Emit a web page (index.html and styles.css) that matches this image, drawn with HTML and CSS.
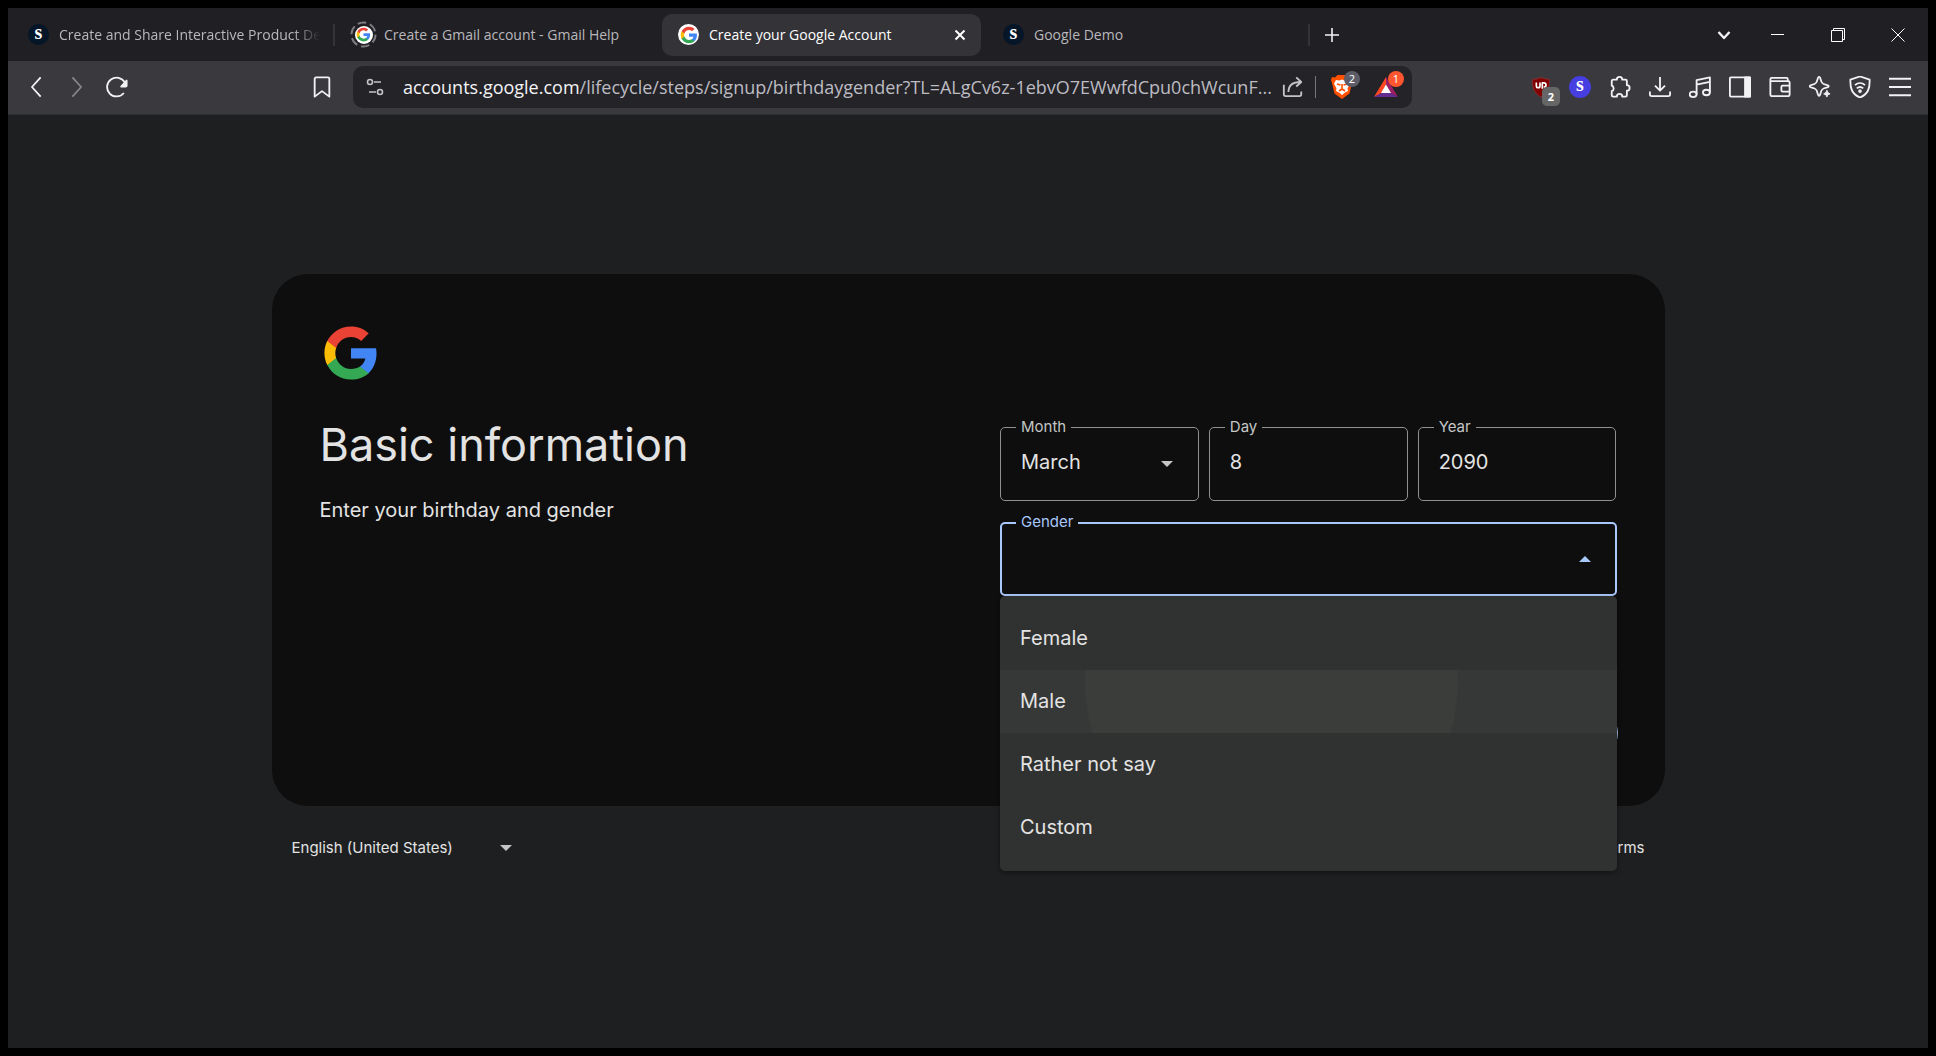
FILE: index.html
```html
<!DOCTYPE html>
<html lang="en">
<head>
    <meta charset="UTF-8">
    <meta name="viewport" content="width=device-width, initial-scale=1.0">
    <title>Create your Google Account</title>
    <link rel="stylesheet" href="styles.css">
</head>
<body>
    <!-- shared icon shapes -->
    <svg class="sprite" aria-hidden="true">
        <symbol id="google-g" viewBox="0 0 48 48">
            <path fill="#4285F4" d="M45.12 24.5c0-1.56-.14-3.06-.4-4.5H24v8.51h11.84c-.51 2.75-2.06 5.08-4.39 6.64v5.52h7.11c4.16-3.83 6.56-9.47 6.56-16.17z"/>
            <path fill="#34A853" d="M24 46c5.94 0 10.92-1.97 14.56-5.33l-7.11-5.52c-1.97 1.32-4.49 2.1-7.45 2.1-5.73 0-10.58-3.87-12.31-9.07H4.34v5.7C7.96 41.07 15.4 46 24 46z"/>
            <path fill="#FBBC05" d="M11.69 28.18C11.25 26.86 11 25.45 11 24s.25-2.86.69-4.18v-5.7H4.34C2.85 17.09 2 20.45 2 24c0 3.55.85 6.91 2.34 9.88l7.35-5.7z"/>
            <path fill="#EA4335" d="M24 10.75c3.23 0 6.13 1.11 8.41 3.29l6.31-6.31C34.91 4.18 29.93 2 24 2 15.4 2 7.96 6.93 4.34 14.12l7.35 5.7c1.73-5.2 6.58-9.07 12.31-9.07z"/>
        </symbol>
    </svg>

    <div class="window">
        <header class="tab-strip">
            <div class="tabs">
                <a href="#" class="tab">
                    <span class="favicon favicon-s">s</span>
                    <span class="tab-title tab-title-fade">Create and Share Interactive Product Demos</span>
                </a>
                <span class="tab-divider"></span>
                <a href="#" class="tab">
                    <span class="favicon favicon-loading">
                        <svg class="spinner" viewBox="0 0 28 28"><circle cx="14" cy="14" r="12.5" fill="none" stroke="#7c7b80" stroke-width="2" stroke-dasharray="9 4.1"/></svg>
                        <span class="favicon favicon-g"><svg viewBox="0 0 48 48"><use href="#google-g"/></svg></span>
                    </span>
                    <span class="tab-title">Create a Gmail account - Gmail Help</span>
                </a>
                <span class="tab-divider tab-divider-hidden"></span>
                <a href="#" class="tab tab-active">
                    <span class="favicon favicon-g"><svg viewBox="0 0 48 48"><use href="#google-g"/></svg></span>
                    <span class="tab-title">Create your Google Account</span>
                    <button class="tab-close" aria-label="Close tab">
                        <svg viewBox="0 0 12 12"><path d="M1.5 1.5l9 9M10.5 1.5l-9 9" stroke="#fff" stroke-width="2" fill="none"/></svg>
                    </button>
                </a>
                <span class="tab-divider tab-divider-hidden"></span>
                <a href="#" class="tab">
                    <span class="favicon favicon-s">s</span>
                    <span class="tab-title">Google Demo</span>
                </a>
                <span class="tab-divider"></span>
                <button class="icon-button" aria-label="New tab">
                    <svg class="icon" viewBox="0 0 20 20"><path d="M10 3v14M3 10h14"/></svg>
                </button>
            </div>
            <div class="window-buttons">
                <button class="icon-button" aria-label="Search tabs">
                    <svg class="icon" viewBox="0 0 20 20"><path d="M4.5 7l5.5 6 5.5-6" stroke-width="2.4"/></svg>
                </button>
                <button class="window-button" aria-label="Minimize">
                    <svg viewBox="0 0 14 14"><path d="M0 6.5h13"/></svg>
                </button>
                <button class="window-button" aria-label="Restore">
                    <svg viewBox="0 0 14 14"><path d="M.5 2.5h11v11H.5zM2.5 2.5v-2h11v11h-2"/></svg>
                </button>
                <button class="window-button" aria-label="Close">
                    <svg viewBox="0 0 14 14"><path d="M.5.5l13 13M13.5.5l-13 13"/></svg>
                </button>
            </div>
        </header>

        <nav class="toolbar">
            <button class="icon-button" aria-label="Back">
                <svg class="icon icon-large" viewBox="0 0 24 24"><path d="M16 1.5L6.5 12 16 22.500"/></svg>
            </button>
            <button class="icon-button icon-muted" aria-label="Forward">
                <svg class="icon icon-large" viewBox="0 0 24 24"><path d="M7 1.5L16.5 12 7 22.500"/></svg>
            </button>
            <button class="icon-button" aria-label="Reload">
                <svg class="icon icon-large" viewBox="0 0 24 24"><path d="M19.5 18.5A10.300 10.300 0 1 1 20.500 7"/><path d="M22.500 5v5.500a1 1 0 0 1-1 1H16.500z" fill="currentColor"/></svg>
            </button>
            <button class="icon-button bookmark" aria-label="Bookmark this page">
                <svg class="icon icon-large" viewBox="0 0 24 24"><path d="M5.5 1.500h13a1.500 1.500 0 0 1 1.500 1.500v19.500l-8-6-8 6V3a1.500 1.500 0 0 1 1.500-1.500z"/></svg>
            </button>

            <div class="url-bar">
                <button class="url-button" aria-label="Site information">
                    <svg class="icon" viewBox="0 0 20 20"><circle cx="5" cy="5" r="2.500"/><path d="M9 5h7M4 15h7"/><circle cx="15" cy="15" r="2.500"/></svg>
                </button>
                <a href="#" class="url-text">accounts.google.com<span class="url-path">/lifecycle/steps/signup/birthdaygender?TL=ALgCv6z-1ebvO7EWwfdCpu0chWcunF...</span></a>
                <button class="url-button" aria-label="Share">
                    <svg class="icon icon-large" viewBox="0 0 24 24"><path d="M2 9.500V20a2 2 0 0 0 2 2h15a2 2 0 0 0 2-2v-3M7 17.500c0-7 3.500-11 13.500-11M15.500 1.500l5.500 5-5.500 5"/></svg>
                </button>
                <span class="url-divider"></span>
                <button class="url-button" aria-label="Brave Shields">
                    <svg class="icon icon-shield" viewBox="0 0 24 24"><path d="M7.500 0h9L19 2.500l3-.5 1 3-1 3-2.500 10.500L12 24l-7.500-5.500L2 8 1 5l1-3 3 .5z" fill="#ff5000" stroke="none"/><path d="M6 5l3.500.5L12 4.500l2.500 1L18 5l2 3.500-2.500 5 .5 2.500-3 1.500-3 2.500-3-2.500L6 16l.5-2.500-2.500-5z" fill="#fff" stroke="none"/><path d="M7 9l3.500 1M17 9l-3.500 1M12 9v5M9 16l3-2 3 2" stroke="#ff5000"/></svg>
                    <span class="badge badge-grey">2</span>
                </button>
                <button class="url-button" aria-label="Brave Rewards">
                    <svg class="icon icon-shield" viewBox="0 0 24 24"><g stroke="none"><path d="M12 2L0 22l7.500-4L12 10z" fill="#ff4724"/><path d="M12 2l12 20-7.500-4L12 10z" fill="#9e1f63"/><path d="M0 22h24l-7.500-4h-9z" fill="#662d91"/><path d="M12 9.500l5 8.500H7z" fill="#fff"/></g></svg>
                    <span class="badge badge-red">1</span>
                </button>
            </div>

            <button class="icon-button" aria-label="uBlock Origin">
                <svg class="icon icon-large" viewBox="0 0 24 24"><path d="M13 1.500c2.500 1.500 5.500 2 9 2 .5 9-1 14-9 19.500C5 17.500 3.500 12.500 4 3.500c3.500 0 6.500-.5 9-2z" fill="#800000" stroke="#a0302f" stroke-width=".8"/><path d="M8 7v3.500c0 3 4 3 4 0V7M14.500 14V7.500h1.500c3.500 0 3.500 4.500 0 4.500" stroke="#fff" stroke-width="1.800"/></svg>
                <span class="badge badge-count">2</span>
            </button>
            <button class="icon-button" aria-label="Recorder"><span class="extension-s">s</span></button>
            <button class="icon-button" aria-label="Extensions">
                <svg class="icon icon-large" viewBox="0 0 24 24"><path d="M3 5.500a1.500 1.500 0 0 1 1.500-1.500H8.500a3 3 0 1 1 6 0H18a1.500 1.500 0 0 1 1.500 1.500V10a3 3 0 1 1 0 6v5a1.500 1.500 0 0 1-1.500 1.500h-3.500a3 3 0 0 0-6 0H4.500A1.500 1.500 0 0 1 3 21v-4.500a3.200 3.200 0 0 0 0-6z"/></svg>
            </button>
            <button class="icon-button" aria-label="Downloads">
                <svg class="icon icon-large" viewBox="0 0 24 24"><path d="M12 1v14.500M6.500 10.500l5.500 5.500 5.500-5.500M1 17v3a2 2 0 0 0 2 2h18a2 2 0 0 0 2-2v-3"/></svg>
            </button>
            <button class="icon-button" aria-label="Playlist">
                <svg class="icon icon-large" viewBox="0 0 24 24"><ellipse cx="4.500" cy="20" rx="3.800" ry="3"/><ellipse cx="19" cy="18" rx="3.800" ry="3"/><path d="M8.300 20V4.500L22.800 1.500V18M8.300 9.500l14.500-3"/></svg>
            </button>
            <button class="icon-button" aria-label="Sidebar">
                <svg class="icon icon-large" viewBox="0 0 24 24"><rect x="1" y="1.500" width="22" height="21" rx="1"/><path d="M17.500 1.500H23v21h-5.500z" fill="currentColor"/></svg>
            </button>
            <button class="icon-button" aria-label="Wallet">
                <svg class="icon icon-large" viewBox="0 0 24 24"><path d="M1.500 6V3.500A1.500 1.500 0 0 1 3 2h16a1.500 1.500 0 0 1 1.500 1.500V6M1.500 5.500H21A1.500 1.500 0 0 1 22.500 7v13.500A1.500 1.500 0 0 1 21 22H3a1.500 1.500 0 0 1-1.500-1.500zM22.500 10.500H15A1.500 1.500 0 0 0 13.500 12v3.500A1.500 1.500 0 0 0 15 17h7.500"/></svg>
            </button>
            <button class="icon-button" aria-label="Leo AI">
                <svg class="icon icon-large" viewBox="0 0 24 24"><path d="M11 1c1 0 1.200.6 1.800 3 .8 3.600 1.700 4.600 5.200 5.300 2.600.6 3.500.9 3.500 1.900s-.9 1.200-3.500 1.800c-3.500.8-4.400 1.700-5.200 5.300-.6 2.400-.8 3.200-1.800 3.200s-1.200-.8-1.800-3.200C8.400 14.700 7.500 13.800 4 13 1.400 12.400.5 12.200.5 11.200S1.400 9.900 4 9.300C7.500 8.600 8.400 7.600 9.200 4 9.800 1.600 10 1 11 1z"/><path d="M19.500 15.500l1 2.500 2.500 1.500-2.500 1-1 2.500-1-2.500-2.500-1L18.500 18z" fill="currentColor" stroke-width="1"/></svg>
            </button>
            <button class="icon-button" aria-label="VPN">
                <svg class="icon icon-large" viewBox="0 0 24 24"><path d="M12 .5L22.500 4c.3 9.500-1.500 15.500-10.500 19.500C3 19.500 1.200 13.500 1.500 4z"/><path d="M6.500 10c3.300-3 7.700-3 11 0M8.500 13.500c2.200-2 4.800-2 7 0"/><circle cx="12" cy="16.500" r="1" fill="currentColor"/></svg>
            </button>
            <button class="icon-button" aria-label="Menu">
                <svg class="icon icon-large" viewBox="0 0 24 24"><path d="M0 3h24M0 12h24M0 21h24"/></svg>
            </button>
        </nav>

        <div class="page">
            <main class="card">
                <svg class="logo" viewBox="0 0 48 48" role="img" aria-label="Google"><use href="#google-g"/></svg>
                <div class="card-columns">
                    <div class="intro">
                        <h1>Basic information</h1>
                        <p>Enter your birthday and gender</p>
                    </div>
                    <form class="form">
                        <div class="birthday">
                            <div class="field">
                                <label for="month">Month</label>
                                <select id="month">
                                    <option>March</option>
                                </select>
                                <span class="arrow"></span>
                            </div>
                            <div class="field">
                                <label for="day">Day</label>
                                <input type="text" id="day" value="8">
                            </div>
                            <div class="field">
                                <label for="year">Year</label>
                                <input type="text" id="year" value="2090">
                            </div>
                        </div>
                        <div class="field field-open">
                            <label for="gender">Gender</label>
                            <select id="gender">
                                <option></option>
                            </select>
                            <span class="arrow"></span>
                            <ul class="menu" role="listbox" aria-label="Gender">
                                <li class="menu-item" role="option">Female</li>
                                <li class="menu-item menu-item-pressed" role="option">Male</li>
                                <li class="menu-item" role="option">Rather not say</li>
                                <li class="menu-item" role="option">Custom</li>
                            </ul>
                        </div>
                    </form>
                </div>
                <div class="actions">
                    <button class="next">Next</button>
                </div>
            </main>

            <footer class="footer">
                <div class="language">
                    <select aria-label="Language">
                        <option>English (United States)</option>
                    </select>
                    <span class="arrow"></span>
                </div>
                <div class="footer-links">
                    <a href="#">Help</a>
                    <a href="#">Privacy</a>
                    <a href="#">Terms</a>
                </div>
            </footer>
        </div>
    </div>
</body>
</html>
```

FILE: styles.css
```css
* {
    box-sizing: border-box;
}
body {
    margin: 0;
    padding: 8px;
    background-color: #000;
    color: #e3e3e3;
    font-family: Inter, sans-serif;
}
button, input, select {
    font-family: inherit;
    color: inherit;
    background: none;
    border: none;
    margin: 0;
    padding: 0;
}
button {
    cursor: pointer;
}
.sprite {
    position: absolute;
    width: 0;
    height: 0;
}
.window {
    display: flex;
    flex-direction: column;
    min-height: calc(100vh - 16px);
    background-color: #1e1f21;
}

/* tabs */
.tab-strip {
    display: flex;
    justify-content: space-between;
    height: 53px;
    padding-left: 4px;
    background-color: #201f23;
    font-family: "Open Sans", sans-serif;
    font-size: 14px;
}
.tabs {
    display: flex;
    align-items: center;
    flex: 1;
    min-width: 0;
}
.tab {
    display: flex;
    align-items: center;
    flex: 0 1 319px;
    min-width: 0;
    height: 42px;
    padding: 0 11px 0 16px;
    gap: 10px;
    border-radius: 10px;
    color: #b9b8bd;
    text-decoration: none;
}
.tab-active {
    background-color: #343338;
    color: #fff;
}
.tab-title {
    flex: 1;
    overflow: hidden;
    white-space: nowrap;
}
.tab-title-fade {
    mask-image: linear-gradient(to right, #000 90%, transparent);
}
.tab-close {
    display: flex;
    padding: 4px;
}
.tab-close svg {
    width: 12px;
    height: 12px;
}
.tab-divider {
    width: 2px;
    height: 22px;
    margin: 0 2px;
    background-color: #343338;
}
.tab-divider-hidden {
    visibility: hidden;
}
.favicon {
    display: flex;
    align-items: center;
    justify-content: center;
    flex: none;
    width: 21px;
    height: 21px;
    border-radius: 50%;
}
.favicon svg {
    width: 18px;
    height: 18px;
}
.favicon-g {
    background-color: #fff;
}
.favicon-s, .extension-s {
    padding-bottom: 4px;
    background-color: #041628;
    color: #fff;
    font: bold 20px/17px "Liberation Serif", serif;
}
.favicon-loading {
    position: relative;
}
.favicon-loading .favicon {
    width: 18px;
    height: 18px;
}
.favicon-loading .favicon svg {
    width: 15px;
    height: 15px;
}
.favicon-loading .spinner {
    position: absolute;
    top: -3px;
    left: -3px;
    width: 27px;
    height: 27px;
}
.window-buttons {
    display: flex;
    align-items: center;
}
.window-buttons .icon-button {
    margin-right: 4px;
}
.window-button {
    display: flex;
    align-items: center;
    justify-content: center;
    width: 60px;
    height: 53px;
}
.window-button svg {
    width: 14px;
    height: 14px;
    fill: none;
    stroke: #fff;
    stroke-width: 1;
}

/* toolbar */
.toolbar {
    display: flex;
    align-items: center;
    height: 54px;
    padding: 0 8px 1px 9px;
    background-color: #3a393d;
    border-bottom: 1px solid #2f2e32;
}
.icon-button {
    position: relative;
    display: flex;
    align-items: center;
    justify-content: center;
    flex: none;
    width: 40px;
    height: 40px;
    color: #f2f2f4;
}
.icon-muted {
    color: #85848a;
}
.icon {
    width: 20px;
    height: 20px;
    fill: none;
    stroke: currentColor;
    stroke-width: 1.6;
    stroke-linejoin: round;
}
.icon-large {
    width: 22px;
    height: 22px;
    stroke-width: 2;
}
.icon-shield {
    width: 24px;
    height: 24px;
}
.bookmark {
    margin-left: auto;
    margin-right: 11px;
}
.url-bar {
    display: flex;
    align-items: center;
    flex: 0 1 1059px;
    min-width: 0;
    height: 42px;
    margin-right: 108px;
    padding-right: 4px;
    border-radius: 10px;
    background-color: #242328;
}
.url-button {
    position: relative;
    display: flex;
    align-items: center;
    justify-content: center;
    flex: none;
    width: 44px;
    height: 42px;
    color: #c4c3c8;
}
.url-text {
    flex: 1;
    overflow: hidden;
    padding-left: 6px;
    white-space: nowrap;
    color: #f4f4f6;
    font: 18px "Open Sans", sans-serif;
    text-decoration: none;
}
.url-path {
    color: #bdbcc2;
}
.url-divider {
    width: 1px;
    height: 22px;
    margin-right: 4px;
    background-color: #77767c;
}
.badge {
    position: absolute;
    top: 5px;
    right: 4px;
    width: 16px;
    height: 16px;
    border-radius: 8px;
    color: #fff;
    font: 11px/16px "Noto Sans", sans-serif;
    text-align: center;
}
.badge-grey {
    background-color: #5c5d68;
}
.badge-red {
    background-color: #ff5630;
}
.badge-count {
    top: 20px;
    right: 0;
    width: 18px;
    height: 19px;
    border-radius: 5px;
    background-color: #666;
    font-weight: bold;
    line-height: 19px;
}
.extension-s {
    width: 22px;
    height: 22px;
    border-radius: 50%;
    background-color: #463ee0;
}

/* sign up page */
.page {
    display: flex;
    flex-direction: column;
    justify-content: center;
    flex: 1;
    width: 100%;
    max-width: 1393px;
    margin: 0 auto;
}
.card {
    display: flex;
    flex-direction: column;
    min-height: 532px;
    padding: 48px;
    border-radius: 36px;
    background-color: #0e0e0e;
}
.logo {
    width: 60px;
    height: 60px;
    padding: 2px 0 0 2px;
}
.card-columns {
    display: grid;
    grid-template-columns: 1fr 1fr;
    gap: 64px;
    padding-top: 31px;
}
h1 {
    margin: 0;
    font-size: 45px;
    font-weight: 400;
    line-height: 64px;
}
.intro p {
    margin: 18px 0 0;
    font-size: 20px;
    line-height: 30px;
}
.form {
    display: flex;
    flex-direction: column;
    gap: 21px;
    padding-top: 14px;
}
.birthday {
    display: grid;
    grid-template-columns: 1fr 1fr 1fr;
    gap: 10px;
}
.field {
    position: relative;
}
.field label {
    position: absolute;
    top: -10px;
    left: 16px;
    padding: 0 5px;
    background-color: #0e0e0e;
    color: #c4c7c5;
    font-size: 15px;
    line-height: 20px;
}
.field input, .field select {
    display: block;
    width: 100%;
    height: 74px;
    padding: 0 20px 4px;
    border: 1px solid #8e918f;
    border-radius: 5px;
    appearance: none;
    font-size: 20px;
    outline: none;
}
.field-open select {
    border: 2px solid #a8c7fa;
}
.field .arrow {
    position: absolute;
    top: 34px;
    right: 26px;
}
.arrow {
    border: 6px solid transparent;
    border-top-color: #c4c7c5;
    border-bottom: none;
    pointer-events: none;
}
.field-open .arrow {
    border-top: none;
    border-bottom: 6px solid #a8c7fa;
}
.field-open label {
    color: #a8c7fa;
}
.menu {
    position: absolute;
    top: 100%;
    left: 0;
    right: 0;
    z-index: 1;
    margin: 0;
    padding: 11px 0 12px;
    overflow: hidden;
    list-style: none;
    border-radius: 5px;
    background-color: #303231;
    box-shadow: 0 2px 4px rgba(0, 0, 0, 0.4);
}
.menu-item {
    height: 63px;
    padding: 0 20px;
    font-size: 20px;
    line-height: 63px;
}
.menu-item-pressed {
    background: radial-gradient(circle 187px at 44% 12px, #3b3d3b 99%, #363837);
}
.actions {
    display: flex;
    justify-content: flex-end;
    margin-top: auto;
    margin-right: -1px;
}
.next {
    height: 50px;
    padding: 0 30px;
    border-radius: 25px;
    background-color: #a8c7fa;
    color: #062e6f;
    font-size: 18px;
}
.footer {
    display: flex;
    align-items: center;
    justify-content: space-between;
    height: 84px;
    padding: 0 20px;
    font-size: 15px;
}
.language {
    display: flex;
    align-items: center;
    width: 220px;
}
.language select {
    flex: 1;
    appearance: none;
    font-size: 15px;
}
.footer-links {
    display: flex;
    gap: 40px;
}
.footer-links a {
    color: inherit;
    text-decoration: none;
}
```
